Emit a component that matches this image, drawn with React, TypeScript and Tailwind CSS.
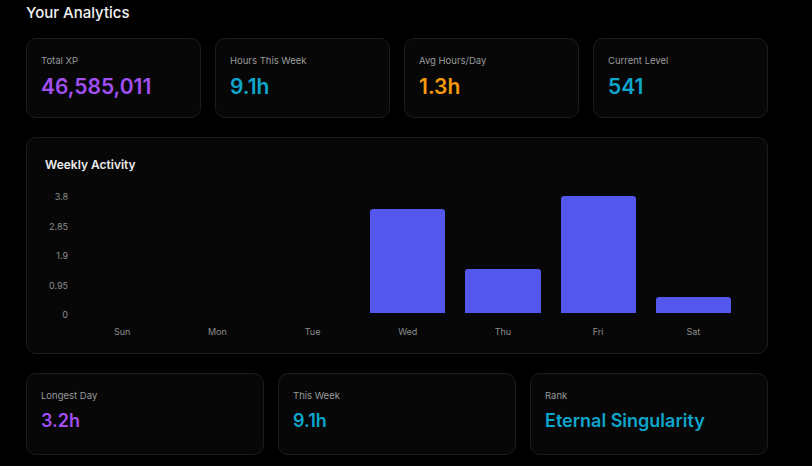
const stats = [
  { label: "Total XP", value: "46,585,011", color: "text-[#a24ff2]" },
  { label: "Hours This Week", value: "9.1h", color: "text-[#0ea5cc]" },
  { label: "Avg Hours/Day", value: "1.3h", color: "text-[#f59a0b]" },
  { label: "Current Level", value: "541", color: "text-[#0ea5cc]" },
];

const summary = [
  { label: "Longest Day", value: "3.2h", color: "text-[#a24ff2]" },
  { label: "This Week", value: "9.1h", color: "text-[#0ea5cc]" },
  { label: "Rank", value: "Eternal Singularity", color: "text-[#0ea5cc]" },
];

const MAX = 3.8;
const PLOT_H = 118;

// hours per day, Sun → Sat
const week = [
  { day: "Sun", hours: 0 },
  { day: "Mon", hours: 0 },
  { day: "Tue", hours: 0 },
  { day: "Wed", hours: 3.35 },
  { day: "Thu", hours: 1.42 },
  { day: "Fri", hours: 3.77 },
  { day: "Sat", hours: 0.52 },
];

const ticks = ["3.8", "2.85", "1.9", "0.95", "0"];

function WeeklyChart() {
  return (
    <div className="rounded-[10px] border border-[#1c1c1c] bg-[#070707] pl-[18px] pr-[26px] pt-[19px] pb-[15px]">
      <h2 className="text-[12px] leading-4 font-semibold text-[#ececec]">Weekly Activity</h2>
      <div className="mt-[18px] flex items-start">
        <div className="flex h-[130px] w-[23px] flex-col justify-between text-right text-[9px] leading-3 text-[#8d8d8d]">
          {ticks.map((t) => (
            <span key={t}>{t}</span>
          ))}
        </div>
        <div className="ml-[6.5px] flex-1">
          <div className="grid h-[122px] grid-cols-7 items-end">
            {week.map((d) => (
              <div key={d.day} className="mx-[10px]">
                {d.hours > 0 && (
                  <div
                    className="rounded-t-[3px] bg-[#5457ec]"
                    style={{ height: Math.round((d.hours / MAX) * PLOT_H) }}
                  />
                )}
              </div>
            ))}
          </div>
          <div className="mt-[13px] grid grid-cols-7 text-center text-[9px] leading-3 text-[#8d8d8d]">
            {week.map((d) => (
              <span key={d.day}>{d.day}</span>
            ))}
          </div>
        </div>
      </div>
    </div>
  );
}

export default function App() {
  return (
    <div
      className="min-h-[466px] w-[812px] bg-black pl-[26px] pr-[44px] pt-px"
      style={{ fontFamily: "Inter, 'Noto Sans', sans-serif" }}
    >
      <h1 className="text-[15px] leading-6 font-medium text-[#f2f2f2]">Your Analytics</h1>

      <div className="mt-[13px] grid grid-cols-4 gap-[14px]">
        {stats.map((s) => (
          <div
            key={s.label}
            className="h-[80px] rounded-[10px] border border-[#1c1c1c] bg-[#070707] px-[14px] pt-[15px]"
          >
            <div className="text-[9.5px] leading-[14px] text-[#9a9a9a]">{s.label}</div>
            <div className={`mt-[5px] text-[21px] leading-7 font-semibold ${s.color}`}>{s.value}</div>
          </div>
        ))}
      </div>

      <div className="mt-[19px]">
        <WeeklyChart />
      </div>

      <div className="mt-[19px] grid grid-cols-3 gap-[14px]">
        {summary.map((s) => (
          <div
            key={s.label}
            className="h-[82px] rounded-[10px] border border-[#1c1c1c] bg-[#070707] px-[14px] pt-[15px]"
          >
            <div className="text-[9.5px] leading-[14px] text-[#9a9a9a]">{s.label}</div>
            <div className={`mt-[6px] text-[18px] leading-6 font-semibold ${s.color}`}>{s.value}</div>
          </div>
        ))}
      </div>
    </div>
  );
}
